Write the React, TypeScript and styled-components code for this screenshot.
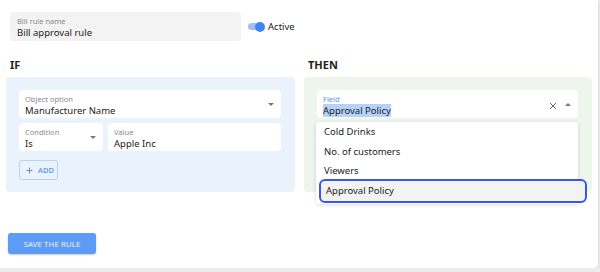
import styled, { createGlobalStyle } from 'styled-components';

const GlobalStyle = createGlobalStyle`
  html, body {
    margin: 0;
    padding: 0;
    background: #ececec;
    font-family: "Noto Sans", "Open Sans", sans-serif;
    color: #222;
  }
`;

const Card = styled.div`
  width: 598px;
  height: 268px;
  box-sizing: border-box;
  background: #fff;
  border-radius: 0 0 4px 0;
  box-shadow: 0 1px 3px rgba(0, 0, 0, 0.12);
  padding: 12px 6px 0 6px;
  display: flex;
  flex-direction: column;
`;

const TopRow = styled.div`
  display: flex;
  align-items: center;
  gap: 7px;
  padding-left: 4px;
`;

const NameField = styled.div`
  width: 231px;
  height: 29px;
  box-sizing: border-box;
  background: #f3f3f3;
  border-radius: 4px;
  padding: 4px 7px 0;
  display: flex;
  flex-direction: column;
`;

const Label = styled.span<{ $accent?: boolean }>`
  font-size: 7.5px;
  line-height: 10px;
  color: ${(p) => (p.$accent ? '#5b8ff0' : '#8a8a8a')};
`;

const Value = styled.span`
  font-size: 9.5px;
  line-height: 13px;
  color: #222;
`;

const Toggle = styled.div`
  display: flex;
  align-items: center;
  gap: 5px;
  font-size: 9.5px;
  color: #222;
`;

const Track = styled.div`
  position: relative;
  width: 15px;
  height: 7px;
  border-radius: 4px;
  background: #9dc0fa;
  &::after {
    content: '';
    position: absolute;
    right: -2px;
    top: -1.5px;
    width: 10px;
    height: 10px;
    border-radius: 50%;
    background: #3f86f4;
  }
`;

const Columns = styled.div`
  display: grid;
  grid-template-columns: 289px 288px;
  gap: 9px;
  margin-top: 17px;
`;

const Column = styled.div`
  display: flex;
  flex-direction: column;
`;

const Heading = styled.h2`
  margin: 0 0 5px 4px;
  font-size: 11px;
  line-height: 14px;
  font-weight: 700;
  color: #222;
`;

const Panel = styled.div<{ $tone: 'blue' | 'green' }>`
  position: relative;
  height: 115px;
  box-sizing: border-box;
  border-radius: 4px;
  background: ${(p) => (p.$tone === 'blue' ? '#eaf2fc' : '#eef5ec')};
  padding: 13px 14px 0 13px;
  display: flex;
  flex-direction: column;
  gap: 5px;
`;

const Field = styled.div<{ $width?: number }>`
  ${(p) => (p.$width ? `width: ${p.$width}px; flex: none;` : 'flex: 1;')}
  height: 28px;
  box-sizing: border-box;
  background: #fff;
  border-radius: 4px;
  padding: 3px 7px 0 6px;
  display: flex;
  align-items: center;
`;

const FullField = styled(Field)`
  flex: none;
`;

const FieldText = styled.div`
  flex: 1;
  display: flex;
  flex-direction: column;
`;

const Selected = styled.span`
  align-self: flex-start;
  background: #b4d3f7;
`;

const Caret = styled.span<{ $up?: boolean }>`
  width: 0;
  height: 0;
  border-left: 3.5px solid transparent;
  border-right: 3.5px solid transparent;
  ${(p) =>
    p.$up
      ? 'border-bottom: 3.5px solid #777; margin-top: -2px;'
      : 'border-top: 3.5px solid #777; margin-top: -2px;'}
`;

const Row = styled.div`
  display: flex;
  gap: 5px;
  height: 29px;
`;

const AddButton = styled.button`
  align-self: flex-start;
  margin-top: 3px;
  height: 20px;
  width: 39px;
  box-sizing: border-box;
  border: 1px solid #b7d2f7;
  border-radius: 3px;
  background: transparent;
  color: #5b8ff0;
  font-family: inherit;
  font-size: 7.5px;
  font-weight: 500;
  display: flex;
  align-items: center;
  gap: 5px;
  padding: 0 0 0 6px;
`;

const Icons = styled.div`
  display: flex;
  align-items: center;
  gap: 8px;
`;

const Menu = styled.div`
  position: absolute;
  left: 12px;
  right: 14px;
  top: 45px;
  background: #fff;
  border-radius: 3px;
  box-shadow: 0 1px 4px rgba(0, 0, 0, 0.14);
  padding-bottom: 1px;
`;

const Option = styled.div<{ $active?: boolean }>`
  height: 19.5px;
  display: flex;
  align-items: center;
  padding-left: 8px;
  font-size: 9.5px;
  color: #222;
  box-sizing: border-box;
  ${(p) =>
    p.$active &&
    `
    background: #f3f3f3;
    margin-left: 3px;
    margin-right: -9px;
    padding-left: 5px;
    border: 2px solid #3556f0;
    border-radius: 6px;
    height: 24px;
    margin-top: -2px;
  `}
`;

const SaveButton = styled.button`
  align-self: flex-start;
  margin: 41px 0 0 2px;
  width: 88px;
  height: 21px;
  border: none;
  border-radius: 3px;
  background: #5c9bf8;
  box-shadow: 0 1px 2px rgba(0, 0, 0, 0.2);
  color: #eef4ff;
  font-family: inherit;
  font-size: 7.8px;
  letter-spacing: 0.1px;
`;

const options = ['Cold Drinks', 'No. of customers', 'Viewers', 'Approval Policy'];

export default function App() {
  return (
    <>
      <GlobalStyle />
      <Card>
        <TopRow>
          <NameField>
            <Label>Bill rule name</Label>
            <Value>Bill approval rule</Value>
          </NameField>
          <Toggle>
            <Track />
            <span>Active</span>
          </Toggle>
        </TopRow>
        <Columns>
          <Column>
            <Heading>IF</Heading>
            <Panel $tone="blue">
              <FullField>
                <FieldText>
                  <Label>Object option</Label>
                  <Value>Manufacturer Name</Value>
                </FieldText>
                <Caret />
              </FullField>
              <Row>
                <Field $width={84}>
                  <FieldText>
                    <Label>Condition</Label>
                    <Value>Is</Value>
                  </FieldText>
                  <Caret />
                </Field>
                <Field>
                  <FieldText>
                    <Label>Value</Label>
                    <Value>Apple Inc</Value>
                  </FieldText>
                </Field>
              </Row>
              <AddButton>
                <svg width="7" height="7" viewBox="0 0 7 7">
                  <path d="M3.5 0.5v6M0.5 3.5h6" stroke="#5b8ff0" strokeWidth="1" />
                </svg>
                ADD
              </AddButton>
            </Panel>
          </Column>
          <Column>
            <Heading>THEN</Heading>
            <Panel $tone="green">
              <FullField>
                <FieldText>
                  <Label $accent>Field</Label>
                  <Value>
                    <Selected>Approval Policy</Selected>
                  </Value>
                </FieldText>
                <Icons>
                  <svg width="8" height="8" viewBox="0 0 8 8">
                    <path d="M1 1l6 6M7 1l-6 6" stroke="#666" strokeWidth="1" />
                  </svg>
                  <Caret $up />
                </Icons>
              </FullField>
              <Menu>
                {options.map((o, i) => (
                  <Option key={o} $active={i === options.length - 1}>
                    {o}
                  </Option>
                ))}
              </Menu>
            </Panel>
          </Column>
        </Columns>
        <SaveButton>SAVE THE RULE</SaveButton>
      </Card>
    </>
  );
}
